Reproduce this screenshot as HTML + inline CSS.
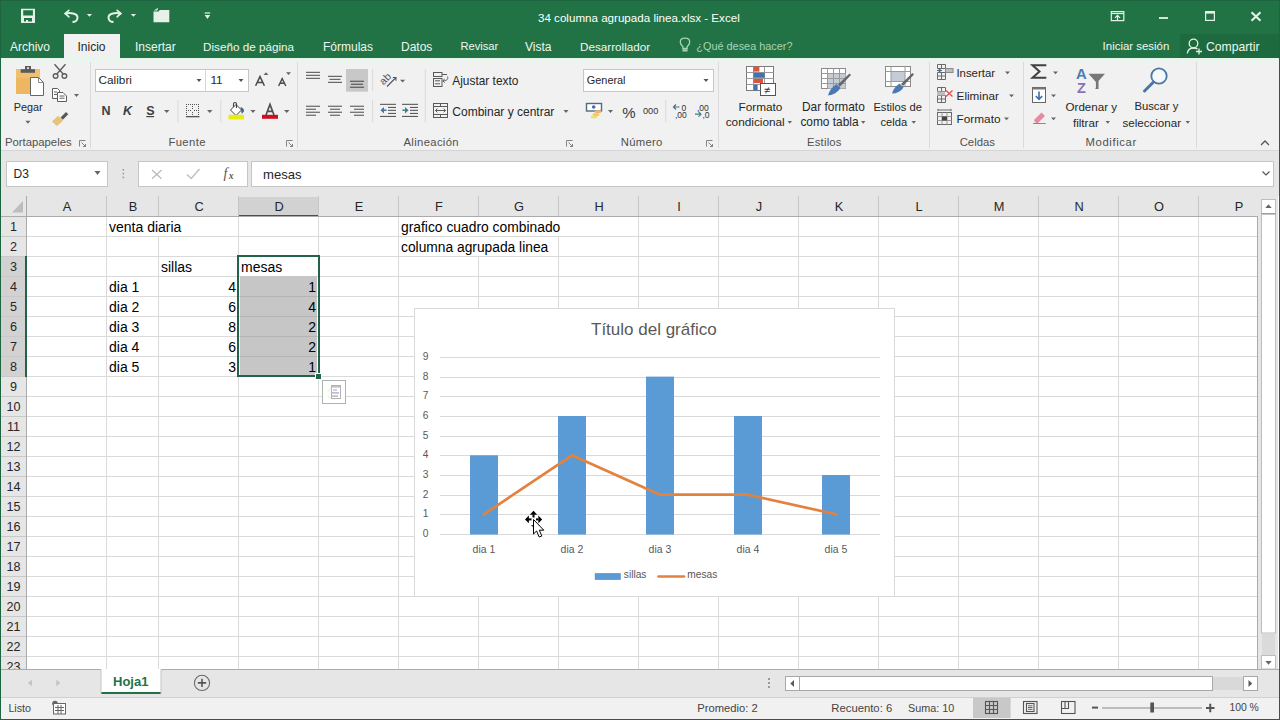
<!DOCTYPE html>
<html><head><meta charset="utf-8">
<style>
*{margin:0;padding:0;box-sizing:border-box}
html,body{width:1280px;height:720px;overflow:hidden;background:#fff;font-family:"Liberation Sans",sans-serif}
.a{position:absolute}
.t{position:absolute;white-space:nowrap;line-height:1}
svg{position:absolute;overflow:visible}
.tab{color:#eef7f1;font-size:12px;top:41px}
.glabel{font-size:11.3px;color:#505050;top:137px}
.vsep{position:absolute;width:1px;background:#dadada}
.rt{position:absolute;white-space:nowrap;line-height:1;font-size:12px;color:#262626}
.colh{position:absolute;top:196px;height:20px;font-size:12.8px;color:#262626;text-align:center;line-height:21px}
.rowh{position:absolute;left:1px;width:25px;height:20px;font-size:12.6px;color:#262626;text-align:center;line-height:21px}
.cell{position:absolute;font-size:14px;color:#000;line-height:1;white-space:nowrap}
.num{position:absolute;font-size:14px;color:#000;line-height:1;white-space:nowrap;text-align:right}
.st{position:absolute;white-space:nowrap;line-height:1;font-size:12px;color:#444}
</style></head><body>
<div class="a" style="left:1px;top:196px;width:1257px;height:20px;background:#e6e6e6"></div>
<div class="a" style="left:1px;top:216px;width:25px;height:453px;background:#e6e6e6"></div>
<div class="a" style="left:239px;top:197px;width:79px;height:18px;background:#d2d2d2"></div>
<div class="a" style="left:238px;top:215px;width:81px;height:2px;background:#22634a"></div>
<div class="a" style="left:1px;top:257px;width:24px;height:119px;background:#d2d2d2"></div>
<div class="colh" style="left:27px;width:80px">A</div>
<div class="a" style="left:106px;top:196px;width:1px;height:20px;background:#c6c6c6"></div>
<div class="colh" style="left:107px;width:52px">B</div>
<div class="a" style="left:158px;top:196px;width:1px;height:20px;background:#c6c6c6"></div>
<div class="colh" style="left:159px;width:80px">C</div>
<div class="a" style="left:238px;top:196px;width:1px;height:20px;background:#c6c6c6"></div>
<div class="colh" style="left:239px;width:80px">D</div>
<div class="a" style="left:318px;top:196px;width:1px;height:20px;background:#c6c6c6"></div>
<div class="colh" style="left:319px;width:80px">E</div>
<div class="a" style="left:398px;top:196px;width:1px;height:20px;background:#c6c6c6"></div>
<div class="colh" style="left:399px;width:80px">F</div>
<div class="a" style="left:478px;top:196px;width:1px;height:20px;background:#c6c6c6"></div>
<div class="colh" style="left:479px;width:80px">G</div>
<div class="a" style="left:558px;top:196px;width:1px;height:20px;background:#c6c6c6"></div>
<div class="colh" style="left:559px;width:80px">H</div>
<div class="a" style="left:638px;top:196px;width:1px;height:20px;background:#c6c6c6"></div>
<div class="colh" style="left:639px;width:80px">I</div>
<div class="a" style="left:718px;top:196px;width:1px;height:20px;background:#c6c6c6"></div>
<div class="colh" style="left:719px;width:80px">J</div>
<div class="a" style="left:798px;top:196px;width:1px;height:20px;background:#c6c6c6"></div>
<div class="colh" style="left:799px;width:80px">K</div>
<div class="a" style="left:878px;top:196px;width:1px;height:20px;background:#c6c6c6"></div>
<div class="colh" style="left:879px;width:80px">L</div>
<div class="a" style="left:958px;top:196px;width:1px;height:20px;background:#c6c6c6"></div>
<div class="colh" style="left:959px;width:80px">M</div>
<div class="a" style="left:1038px;top:196px;width:1px;height:20px;background:#c6c6c6"></div>
<div class="colh" style="left:1039px;width:80px">N</div>
<div class="a" style="left:1118px;top:196px;width:1px;height:20px;background:#c6c6c6"></div>
<div class="colh" style="left:1119px;width:80px">O</div>
<div class="a" style="left:1198px;top:196px;width:1px;height:20px;background:#c6c6c6"></div>
<div class="colh" style="left:1199px;width:80px">P</div>
<div class="rowh" style="top:217px">1</div>
<div class="a" style="left:1px;top:236px;width:25px;height:1px;background:#c9c9c9"></div>
<div class="rowh" style="top:237px">2</div>
<div class="a" style="left:1px;top:256px;width:25px;height:1px;background:#c9c9c9"></div>
<div class="rowh" style="top:257px">3</div>
<div class="a" style="left:1px;top:276px;width:25px;height:1px;background:#c9c9c9"></div>
<div class="rowh" style="top:277px">4</div>
<div class="a" style="left:1px;top:296px;width:25px;height:1px;background:#c9c9c9"></div>
<div class="rowh" style="top:297px">5</div>
<div class="a" style="left:1px;top:316px;width:25px;height:1px;background:#c9c9c9"></div>
<div class="rowh" style="top:317px">6</div>
<div class="a" style="left:1px;top:336px;width:25px;height:1px;background:#c9c9c9"></div>
<div class="rowh" style="top:337px">7</div>
<div class="a" style="left:1px;top:356px;width:25px;height:1px;background:#c9c9c9"></div>
<div class="rowh" style="top:357px">8</div>
<div class="a" style="left:1px;top:376px;width:25px;height:1px;background:#c9c9c9"></div>
<div class="rowh" style="top:377px">9</div>
<div class="a" style="left:1px;top:396px;width:25px;height:1px;background:#c9c9c9"></div>
<div class="rowh" style="top:397px">10</div>
<div class="a" style="left:1px;top:416px;width:25px;height:1px;background:#c9c9c9"></div>
<div class="rowh" style="top:417px">11</div>
<div class="a" style="left:1px;top:436px;width:25px;height:1px;background:#c9c9c9"></div>
<div class="rowh" style="top:437px">12</div>
<div class="a" style="left:1px;top:456px;width:25px;height:1px;background:#c9c9c9"></div>
<div class="rowh" style="top:457px">13</div>
<div class="a" style="left:1px;top:476px;width:25px;height:1px;background:#c9c9c9"></div>
<div class="rowh" style="top:477px">14</div>
<div class="a" style="left:1px;top:496px;width:25px;height:1px;background:#c9c9c9"></div>
<div class="rowh" style="top:497px">15</div>
<div class="a" style="left:1px;top:516px;width:25px;height:1px;background:#c9c9c9"></div>
<div class="rowh" style="top:517px">16</div>
<div class="a" style="left:1px;top:536px;width:25px;height:1px;background:#c9c9c9"></div>
<div class="rowh" style="top:537px">17</div>
<div class="a" style="left:1px;top:556px;width:25px;height:1px;background:#c9c9c9"></div>
<div class="rowh" style="top:557px">18</div>
<div class="a" style="left:1px;top:576px;width:25px;height:1px;background:#c9c9c9"></div>
<div class="rowh" style="top:577px">19</div>
<div class="a" style="left:1px;top:596px;width:25px;height:1px;background:#c9c9c9"></div>
<div class="rowh" style="top:597px">20</div>
<div class="a" style="left:1px;top:616px;width:25px;height:1px;background:#c9c9c9"></div>
<div class="rowh" style="top:617px">21</div>
<div class="a" style="left:1px;top:636px;width:25px;height:1px;background:#c9c9c9"></div>
<div class="rowh" style="top:637px">22</div>
<div class="a" style="left:1px;top:656px;width:25px;height:1px;background:#c9c9c9"></div>
<div class="rowh" style="top:657px">23</div>
<div class="a" style="left:1px;top:676px;width:25px;height:1px;background:#c9c9c9"></div>
<div class="a" style="left:1px;top:216px;width:1257px;height:1px;background:#ababab"></div>
<div class="a" style="left:26px;top:196px;width:1px;height:473px;background:#ababab"></div>
<div class="a" style="left:25px;top:256px;width:2px;height:121px;background:#22634a"></div>
<div class="a" style="left:27px;top:217px;width:1230px;height:452px;background:#fff"></div>
<div class="a" style="left:106px;top:217px;width:1px;height:452px;background:#dadada"></div>
<div class="a" style="left:158px;top:217px;width:1px;height:452px;background:#dadada"></div>
<div class="a" style="left:238px;top:217px;width:1px;height:452px;background:#dadada"></div>
<div class="a" style="left:318px;top:217px;width:1px;height:452px;background:#dadada"></div>
<div class="a" style="left:398px;top:217px;width:1px;height:452px;background:#dadada"></div>
<div class="a" style="left:478px;top:217px;width:1px;height:452px;background:#dadada"></div>
<div class="a" style="left:558px;top:217px;width:1px;height:452px;background:#dadada"></div>
<div class="a" style="left:638px;top:217px;width:1px;height:452px;background:#dadada"></div>
<div class="a" style="left:718px;top:217px;width:1px;height:452px;background:#dadada"></div>
<div class="a" style="left:798px;top:217px;width:1px;height:452px;background:#dadada"></div>
<div class="a" style="left:878px;top:217px;width:1px;height:452px;background:#dadada"></div>
<div class="a" style="left:958px;top:217px;width:1px;height:452px;background:#dadada"></div>
<div class="a" style="left:1038px;top:217px;width:1px;height:452px;background:#dadada"></div>
<div class="a" style="left:1118px;top:217px;width:1px;height:452px;background:#dadada"></div>
<div class="a" style="left:1198px;top:217px;width:1px;height:452px;background:#dadada"></div>
<div class="a" style="left:27px;top:236px;width:1230px;height:1px;background:#dadada"></div>
<div class="a" style="left:27px;top:256px;width:1230px;height:1px;background:#dadada"></div>
<div class="a" style="left:27px;top:276px;width:1230px;height:1px;background:#dadada"></div>
<div class="a" style="left:27px;top:296px;width:1230px;height:1px;background:#dadada"></div>
<div class="a" style="left:27px;top:316px;width:1230px;height:1px;background:#dadada"></div>
<div class="a" style="left:27px;top:336px;width:1230px;height:1px;background:#dadada"></div>
<div class="a" style="left:27px;top:356px;width:1230px;height:1px;background:#dadada"></div>
<div class="a" style="left:27px;top:376px;width:1230px;height:1px;background:#dadada"></div>
<div class="a" style="left:27px;top:396px;width:1230px;height:1px;background:#dadada"></div>
<div class="a" style="left:27px;top:416px;width:1230px;height:1px;background:#dadada"></div>
<div class="a" style="left:27px;top:436px;width:1230px;height:1px;background:#dadada"></div>
<div class="a" style="left:27px;top:456px;width:1230px;height:1px;background:#dadada"></div>
<div class="a" style="left:27px;top:476px;width:1230px;height:1px;background:#dadada"></div>
<div class="a" style="left:27px;top:496px;width:1230px;height:1px;background:#dadada"></div>
<div class="a" style="left:27px;top:516px;width:1230px;height:1px;background:#dadada"></div>
<div class="a" style="left:27px;top:536px;width:1230px;height:1px;background:#dadada"></div>
<div class="a" style="left:27px;top:556px;width:1230px;height:1px;background:#dadada"></div>
<div class="a" style="left:27px;top:576px;width:1230px;height:1px;background:#dadada"></div>
<div class="a" style="left:27px;top:596px;width:1230px;height:1px;background:#dadada"></div>
<div class="a" style="left:27px;top:616px;width:1230px;height:1px;background:#dadada"></div>
<div class="a" style="left:27px;top:636px;width:1230px;height:1px;background:#dadada"></div>
<div class="a" style="left:27px;top:656px;width:1230px;height:1px;background:#dadada"></div>
<div class="a" style="left:1257px;top:216px;width:1px;height:453px;background:#ababab"></div>
<div class="a" style="left:158px;top:217px;width:1px;height:19px;background:#fff"></div>
<div class="a" style="left:478px;top:217px;width:1px;height:19px;background:#fff"></div>
<div class="a" style="left:478px;top:237px;width:1px;height:19px;background:#fff"></div>
<div class="a" style="left:558px;top:217px;width:1px;height:19px;background:#fff"></div>
<div class="cell" style="left:109px;top:220px">venta diaria</div>
<div class="cell" style="left:401px;top:221px;font-size:13.85px">grafico cuadro combinado</div>
<div class="cell" style="left:401px;top:241px;font-size:13.8px">columna agrupada linea</div>
<div class="cell" style="left:161px;top:260px">sillas</div>
<div class="a" style="left:240px;top:276px;width:77px;height:99px;background:#c6c6c6"></div>
<div class="a" style="left:240px;top:296px;width:77px;height:1px;background:#b4b4b4"></div>
<div class="a" style="left:240px;top:316px;width:77px;height:1px;background:#b4b4b4"></div>
<div class="a" style="left:240px;top:336px;width:77px;height:1px;background:#b4b4b4"></div>
<div class="a" style="left:240px;top:356px;width:77px;height:1px;background:#b4b4b4"></div>
<div class="cell" style="left:241px;top:260px">mesas</div>
<div class="cell" style="left:109px;top:280px">dia 1</div>
<div class="cell" style="left:109px;top:300px">dia 2</div>
<div class="cell" style="left:109px;top:320px">dia 3</div>
<div class="cell" style="left:109px;top:340px">dia 4</div>
<div class="cell" style="left:109px;top:360px">dia 5</div>
<div class="num" style="left:200px;width:36px;top:280px">4</div>
<div class="num" style="left:200px;width:36px;top:300px">6</div>
<div class="num" style="left:200px;width:36px;top:320px">8</div>
<div class="num" style="left:200px;width:36px;top:340px">6</div>
<div class="num" style="left:200px;width:36px;top:360px">3</div>
<div class="num" style="left:280px;width:36px;top:280px">1</div>
<div class="num" style="left:280px;width:36px;top:300px">4</div>
<div class="num" style="left:280px;width:36px;top:320px">2</div>
<div class="num" style="left:280px;width:36px;top:340px">2</div>
<div class="num" style="left:280px;width:36px;top:360px">1</div>
<!-- selection -->
<div class="a" style="left:237px;top:255px;width:83px;height:122px;border:2px solid #22634a"></div>
<div class="a" style="left:316px;top:374px;width:5px;height:5px;background:#22634a;outline:1px solid #fff"></div>
<div class="a" style="left:322px;top:380px;width:24px;height:24px;border:1px solid #b2c2b8;background:#fff"></div>
<!-- window border -->
<div class="a" style="left:0;top:0;width:1280px;height:720px;border:1px solid #1f6440;z-index:50;pointer-events:none"></div>
<!-- title bar + tabs -->
<div class="a" style="left:0;top:0;width:1280px;height:58px;background:#217346"></div>
<div class="t" style="left:538px;top:12px;font-size:11.6px;color:#fff">34 columna agrupada linea.xlsx - Excel</div>
<div class="t tab" style="left:10px;top:41px">Archivo</div>
<div class="a" style="left:64px;top:34px;width:56px;height:25px;background:#f1f1f1"></div>
<div class="t tab" style="left:77.5px;top:41px;color:#262626">Inicio</div>
<div class="t tab" style="left:135px">Insertar</div>
<div class="t tab" style="left:203px;font-size:11.7px">Diseño de página</div>
<div class="t tab" style="left:323px">Fórmulas</div>
<div class="t tab" style="left:401px">Datos</div>
<div class="t tab" style="left:460.4px;font-size:11.2px">Revisar</div>
<div class="t tab" style="left:525px">Vista</div>
<div class="t tab" style="left:580px;font-size:11.7px">Desarrollador</div>
<div class="t tab" style="left:696.3px;top:41px;font-size:10.9px;color:#a6d4b4">¿Qué desea hacer?</div>
<div class="t tab" style="left:1102.6px;font-size:11.45px">Iniciar sesión</div>
<div class="a" style="left:1180px;top:34px;width:100px;height:24px;background:#1d6a3f"></div>
<div class="t tab" style="left:1206px;font-size:12.2px">Compartir</div>
<!-- ribbon -->
<div class="a" style="left:0;top:58px;width:1280px;height:93px;background:linear-gradient(#e6f6ec 0px,#e6f6ec 1px,#ecf4ee 3px,#f1f1f1 7px);border-bottom:1px solid #d5d5d5"></div>
<div class="t glabel" style="left:5px">Portapapeles</div>
<div class="t glabel" style="left:168.4px;letter-spacing:0.4px">Fuente</div>
<div class="t glabel" style="left:403.5px;letter-spacing:0.33px">Alineación</div>
<div class="t glabel" style="left:620.8px;letter-spacing:0.28px">Número</div>
<div class="t glabel" style="left:807px;letter-spacing:0.2px">Estilos</div>
<div class="t glabel" style="left:959.7px">Celdas</div>
<div class="t glabel" style="left:1085.6px;letter-spacing:0.6px">Modificar</div>
<div class="vsep" style="left:90px;top:62px;height:86px"></div>
<div class="vsep" style="left:297px;top:62px;height:86px"></div>
<div class="vsep" style="left:718px;top:62px;height:86px"></div>
<div class="vsep" style="left:929px;top:62px;height:86px"></div>
<div class="vsep" style="left:1023px;top:62px;height:86px"></div>
<div class="vsep" style="left:1196px;top:62px;height:86px"></div>
<!-- formula bar -->
<div class="a" style="left:0;top:151px;width:1280px;height:45px;background:#e6e6e6"></div>
<div class="a" style="left:6px;top:161px;width:102px;height:26px;background:#fff;border:1px solid #c6c6c6"></div>
<div class="t" style="left:13.5px;top:168px;font-size:12px;color:#262626">D3</div>
<div class="a" style="left:138px;top:161px;width:110px;height:26px;background:#fff;border:1px solid #c6c6c6"></div>
<div class="a" style="left:251px;top:161px;width:1023px;height:26px;background:#fff;border:1px solid #c6c6c6"></div>
<div class="t" style="left:263px;top:168px;font-size:13.1px;color:#262626">mesas</div>
<div class="t" style="left:223.5px;top:167px;font-size:14px;font-family:'Liberation Serif';font-style:italic;color:#555">f</div>
<div class="t" style="left:228.8px;top:171.5px;font-size:9.5px;font-family:'Liberation Serif';font-style:italic;font-weight:bold;color:#555">x</div>
<svg style="left:0;top:0" width="1280" height="720" viewBox="0 0 1280 720">
<!-- ===== title bar icons ===== -->
<g fill="#e6f2e7" stroke="none">
  <path d="M21 8.7H35V23H21Z M23.2 10.3V15.6H32.9V10.3Z M24 18V21.5H26V20H28V21.5H32V18Z" fill-rule="evenodd"/>
  <!-- undo -->
  <path d="M65.5 13.5 C 70 12.5, 77.5 13, 77.5 17.5 C 77.5 20.5, 75 22, 72.5 22" fill="none" stroke="#e6f2e7" stroke-width="2"/>
  <path d="M63.8 13.6 L69 9.2 L69.8 10.6 L66.6 13.6 L69.8 16.4 L69 17.9Z"/>
  <path d="M86.9 14H92L89.45 16.8Z"/>
  <!-- redo -->
  <path d="M120.5 13.5 C 116 12.5, 108.5 13, 108.5 17.5 C 108.5 20.5, 111 22, 113.5 22" fill="none" stroke="#e6f2e7" stroke-width="2"/>
  <path d="M122.2 13.6 L117 9.2 L116.2 10.6 L119.4 13.6 L116.2 16.4 L117 17.9Z"/>
  <path d="M130.8 14H136L133.4 16.8Z"/>
  <!-- folder -->
  <path d="M153.5 11.5H158.5L159.8 10H169.3V22.3H153.5Z"/>
  <path d="M154.5 10.5 L157.5 8.6 M157.5 8.6 L156.5 10.8" stroke="#e6f2e7" stroke-width="1" fill="none"/>
  <!-- customize -->
  <rect x="204.7" y="12.4" width="5.5" height="1.2"/>
  <path d="M204.7 15H210.2L207.45 18.9Z"/>
</g>
<!-- window controls -->
<g fill="none" stroke="#e6f2e7" stroke-width="1.2">
  <rect x="1111.3" y="11.6" width="12.5" height="9"/>
  <path d="M1111.3 13.5H1123.8"/>
  <path d="M1117.5 20.5V15.5 M1115 17.8L1117.5 15.3L1120 17.8"/>
  <path d="M1159 18H1168" stroke-width="1.8"/>
  <rect x="1205.6" y="11.6" width="8.8" height="8.8"/>
  <path d="M1205.6 12.6H1214.4" stroke-width="2"/>
  <path d="M1251.5 12.3L1260.5 20.8M1260.5 12.3L1251.5 20.8" stroke-width="2.1"/>
</g>
<!-- share person -->
<g fill="none" stroke="#e6f2e7" stroke-width="1.3">
  <circle cx="1193.5" cy="43.5" r="4.3"/>
  <path d="M1187.3 53.5 C1187.8 49.5, 1190 48, 1193.5 48 C1195 48, 1196.5 48.3, 1197.5 49"/>
  <path d="M1199 48.5V54.5 M1196 51.5H1202"/>
</g>
<!-- lightbulb -->
<g fill="none" stroke="#a6d4b4" stroke-width="1.3">
  <path d="M682.8 48.5 V46.5 C681.2 45.2, 680.3 43.8, 680.3 42 C680.3 39.6, 682.5 38.2, 685 38.2 C687.5 38.2, 689.7 39.6, 689.7 42 C689.7 43.8, 688.8 45.2, 687.2 46.5 V48.5Z"/>
</g>
<rect x="682.5" y="49.3" width="5" height="2.2" fill="#a6d4b4"/>
<!-- ===== Portapapeles ===== -->
<rect x="16" y="69" width="24" height="25" fill="#ecb760"/>
<rect x="16" y="69" width="24" height="9" fill="#f0c77a" opacity=".6"/>
<rect x="20.7" y="69.2" width="14.3" height="3.6" fill="#5b5b5b"/>
<rect x="25" y="66" width="6" height="4" fill="#5b5b5b"/>
<rect x="27" y="67.3" width="2" height="1.6" fill="#f1f1f1"/>
<path d="M30.5 77.5H38.5L43.5 82.5V95.5H30.5Z" fill="#fff" stroke="#666" stroke-width="1"/>
<path d="M38.5 77.5V82.5H43.5" fill="none" stroke="#888" stroke-width="1"/>
<!-- scissors -->
<g fill="none" stroke="#5e5e5e" stroke-width="1.4">
  <circle cx="55.6" cy="76" r="2.3"/>
  <circle cx="64.4" cy="76" r="2.3"/>
  <path d="M56.8 74 L65.5 64.3 M63.2 74 L54.5 64.3"/>
</g>
<!-- copy -->
<g fill="#fff" stroke="#5e5e5e" stroke-width="1">
  <path d="M52.5 88.5H57.5L59.5 90.5V98.5H52.5Z"/>
  <path d="M57.5 92.5H63L66.5 96V101.5H57.5Z"/>
</g>
<g stroke="#5e5e5e" stroke-width="1">
  <path d="M54 92H57 M54 94.5H57 M59.5 96H64.5 M59.5 98.2H64.5"/>
</g>
<path d="M74 94H79L76.5 97Z" fill="#666"/>
<!-- brush -->
<path d="M60.5 117.5 L66 112 L68.3 114.3 L62.8 119.8Z" fill="#595959"/>
<path d="M52 121.5 L58 115.8 L63 120.8 L57 126 C55 124.5, 53.5 123, 52 121.5Z" fill="#e6c27a"/>
<path d="M25.4 120.7H30.4L27.9 123.7Z" fill="#666"/>

<!-- ===== Fuente ===== -->
<rect x="95.5" y="69.5" width="153" height="22" fill="#fff" stroke="#c6c6c6"/>
<path d="M205.5 70V91" stroke="#d6d6d6"/>
<path d="M196.5 79H201.5L199 82Z M238.5 79H243.5L241 82Z" fill="#555"/>
<!-- grow / shrink font -->
<path d="M263.5 75H268.5L266 72.3Z M286 72.3H291L288.5 75Z" fill="#666"/>
<path d="M255.6 85.8 L260 76.6 L264.4 85.8 M257.3 82.4 H262.7" fill="none" stroke="#4a4a4a" stroke-width="1.5"/>
<path d="M278.6 86 L282.2 78.6 L285.8 86 M280 83.3 H284.4" fill="none" stroke="#4a4a4a" stroke-width="1.4"/>
<!-- N K S -->
<path d="M164 110H169.5L166.75 113Z M207 110H212.5L209.75 113Z M250.4 110H255.5L253 113Z M284 110H289.5L286.75 113Z" fill="#666"/>
<rect x="146.3" y="116" width="7.8" height="1.2" fill="#444"/>
<path d="M177.9 100V122 M220.8 100V122" stroke="#d9d9d9"/>
<!-- borders -->
<g fill="#555">
  <path d="M186 104h1v1h-1z M188 104h1v1h-1z M190 104h1v1h-1z M192 104h1v1h-1z M194 104h1v1h-1z M196 104h1v1h-1z M198 104h1v1h-1z
           M186 106h1v1h-1z M186 108h1v1h-1z M186 110h1v1h-1z M186 112h1v1h-1z M186 114h1v1h-1z
           M198 106h1v1h-1z M198 108h1v1h-1z M198 110h1v1h-1z M198 112h1v1h-1z M198 114h1v1h-1z
           M192 106h1v1h-1z M192 108h1v1h-1z M192 112h1v1h-1z M192 114h1v1h-1z
           M188 110h1v1h-1z M190 110h1v1h-1z M194 110h1v1h-1z M196 110h1v1h-1z"/>
  <rect x="186" y="116" width="13.5" height="1.3"/>
</g>
<!-- fill color -->
<path d="M230.5 110 L236 104.5 L241.5 110 L236 115.5Z" fill="#fff" stroke="#444" stroke-width="1"/>
<path d="M233.5 107 V104 C233.5 102, 236.5 102, 236.5 104 V108" fill="none" stroke="#444" stroke-width="1.1"/>
<path d="M240.5 107 C243 107.5, 244.5 109.5, 243.8 111.5 L241.8 114 Z" fill="#3f6290"/>
<rect x="228.5" y="114.8" width="15.5" height="4.6" fill="#e6ee10"/>
<!-- font color -->
<path d="M266 115 L270 104.5 L274 115 M267.5 111.3 H272.5" fill="none" stroke="#505050" stroke-width="1.7"/>
<rect x="262" y="114.8" width="16" height="4" fill="#cc1020"/>
<!-- ===== Alineación ===== -->
<g fill="#5a5a5a">
  <rect x="306" y="71.8" width="14" height="1.1"/><rect x="306" y="74.8" width="14" height="1.1"/><rect x="306" y="77.8" width="14" height="1.1"/>
  <rect x="328" y="75.8" width="14" height="1.1"/><rect x="329.5" y="78.8" width="11" height="1.1"/><rect x="328" y="81.8" width="14" height="1.1"/>
</g>
<rect x="346" y="69" width="22" height="22.7" fill="#c8c8c8"/>
<g fill="#505050">
  <rect x="350" y="80.7" width="14" height="1.1"/><rect x="351" y="83.7" width="12" height="1.1"/><rect x="350" y="86.7" width="14" height="1.1"/>
</g>
<path d="M372.6 69V91 M372.6 100V122" stroke="#d9d9d9"/>
<!-- orientation -->
<text x="0" y="0" transform="translate(383.5 85.5) rotate(-45)" font-family="Liberation Sans" font-size="10.5" fill="#555">ab</text>
<path d="M387 86.5 L396 77.5 M392.8 77.5 H396 V80.7" fill="none" stroke="#555" stroke-width="1.1"/>
<path d="M400 79.8H405.2L402.6 82.5Z" fill="#666"/>
<g fill="#5a5a5a">
  <rect x="306" y="105.7" width="14" height="1.1"/><rect x="306" y="108.7" width="10" height="1.1"/><rect x="306" y="111.7" width="14" height="1.1"/><rect x="306" y="114.7" width="10" height="1.1"/>
  <rect x="328" y="105.7" width="14" height="1.1"/><rect x="330" y="108.7" width="10" height="1.1"/><rect x="328" y="111.7" width="14" height="1.1"/><rect x="330" y="114.7" width="10" height="1.1"/>
  <rect x="350" y="105.7" width="14" height="1.1"/><rect x="354" y="108.7" width="10" height="1.1"/><rect x="350" y="111.7" width="14" height="1.1"/><rect x="354" y="114.7" width="10" height="1.1"/>
  <!-- indent dec -->
  <rect x="380" y="103.8" width="16" height="1.1"/><rect x="388" y="106.9" width="8" height="1.1"/><rect x="388" y="109.8" width="8" height="1.1"/><rect x="388" y="112.9" width="8" height="1.1"/><rect x="380" y="115.9" width="16" height="1.1"/>
  <!-- indent inc -->
  <rect x="402" y="103.8" width="16" height="1.1"/><rect x="410" y="106.9" width="8" height="1.1"/><rect x="410" y="109.8" width="8" height="1.1"/><rect x="410" y="112.9" width="8" height="1.1"/><rect x="402" y="115.9" width="16" height="1.1"/>
</g>
<path d="M380.5 110.3 L384 107 V109.5 H386.5 V111 H384 V113.5Z" fill="#4a72a8"/>
<path d="M408.5 110.3 L405 107 V109.5 H402.5 V111 H405 V113.5Z" fill="#3f7f86"/>
<path d="M425.3 69V122" stroke="#d9d9d9"/>
<!-- wrap text icon -->
<g fill="none" stroke="#5a5a5a" stroke-width="1">
  <rect x="433.5" y="72.5" width="8.5" height="4"/>
  <path d="M442 74.5H447"/>
  <rect x="433.5" y="78.5" width="8.5" height="8"/>
  <path d="M435 80.8H440 M435 83.8H440"/>
  <path d="M447.5 76.5 C448.5 79, 447 80.8, 443 80.8"/>
  <path d="M444.8 79 L442.8 80.8 L444.8 82.6"/>
</g>
<!-- merge icon -->
<g fill="none" stroke="#5a5a5a" stroke-width="1">
  <rect x="433.5" y="103.5" width="14" height="14"/>
  <path d="M433.5 106.5H447.5 M433.5 114.5H447.5 M440.5 103.5V106.5 M440.5 114.5V117.5"/>
  <path d="M435.5 110.5H445.5 M437.3 108.7L435.5 110.5L437.3 112.3 M443.7 108.7L445.5 110.5L443.7 112.3"/>
</g>
<path d="M563.5 110H568.5L566 113Z" fill="#666"/>
<!-- launchers -->
<g fill="none" stroke="#777" stroke-width="0.9">
  <path d="M79.5 146.5V140.5H85.5 M81.5 142.5L85.5 146.5 M85.5 144V146.5H83"/>
  <path d="M286.5 146.5V140.5H292.5 M288.5 142.5L292.5 146.5 M292.5 144V146.5H290"/>
  <path d="M566.5 146.5V140.5H572.5 M568.5 142.5L572.5 146.5 M572.5 144V146.5H570"/>
  <path d="M706.5 146.5V140.5H712.5 M708.5 142.5L712.5 146.5 M712.5 144V146.5H710"/>
</g>

<!-- ===== Número ===== -->
<rect x="583.5" y="69.5" width="130" height="22" fill="#fff" stroke="#c6c6c6"/>
<path d="M703.5 79H708.5L706 82Z" fill="#555"/>
<!-- currency -->
<rect x="586.5" y="103.5" width="15" height="7.5" fill="#fff" stroke="#4d6c80" stroke-width="1.4"/>
<circle cx="593.7" cy="107" r="1.8" fill="#5a5fa8"/>
<ellipse cx="598" cy="111.5" rx="3.5" ry="1.6" fill="#f0b070"/>
<ellipse cx="596" cy="114.5" rx="3.5" ry="1.6" fill="#f0c860"/>
<ellipse cx="594" cy="117" rx="3.5" ry="1.4" fill="#e8e070"/>
<path d="M608 110H613L610.5 113Z" fill="#666"/>
<path d="M665.7 100V122" stroke="#d9d9d9"/>
<!-- decimals -->
<path d="M679.5 107H673.5 M676 104.5L673.5 107L676 109.5" fill="none" stroke="#4a6f86" stroke-width="1.2"/>
<path d="M695 114.2H701 M698.5 111.7L701 114.2L698.5 116.7" fill="none" stroke="#3f7f86" stroke-width="1.2"/>

<!-- ===== Estilos ===== -->
<!-- formato condicional -->
<g>
  <rect x="746.5" y="66.5" width="27" height="24" fill="#fff" stroke="#7a7a7a" stroke-width="1"/>
  <path d="M746.5 72.5H773.5 M746.5 78.5H773.5 M746.5 84.5H773.5 M753.5 66.5V90.5 M764.5 66.5V90.5" stroke="#9a9a9a" stroke-width="1"/>
  <rect x="753.6" y="66.6" width="5.8" height="5" fill="#d8543c"/>
  <rect x="753.6" y="72.8" width="11" height="5" fill="#4471b0"/>
  <rect x="753.6" y="78.9" width="9.4" height="4.2" fill="#d8543c"/>
  <rect x="753.6" y="84.6" width="4" height="5.8" fill="#4471b0"/>
  <rect x="760.5" y="83.5" width="15" height="12" fill="#fff" stroke="#555" stroke-width="1"/>
  <text x="764" y="93.5" font-family="Liberation Sans" font-size="11" fill="#333">≠</text>
</g>
<!-- dar formato como tabla -->
<g>
  <rect x="821.5" y="68.5" width="24" height="20" fill="#fff" stroke="#8a8a8a"/>
  <rect x="828" y="73" width="17.5" height="15.5" fill="#c5ccd6"/>
  <path d="M821.5 73.5H845.5 M821.5 78.5H845.5 M821.5 83.5H845.5 M827.5 68.5V88.5 M833.5 68.5V88.5 M839.5 68.5V88.5" stroke="#9a9a9a" stroke-width="1"/>
  <path d="M838 84.5 L849.5 73.5 L851 75 L840 86.5Z" fill="#666"/>
  <path d="M828 95.5 C829 91, 832 87, 836.5 84 L840.5 88 C837.5 92.5, 833.5 95, 828 95.5Z" fill="#4a78b0"/>
</g>
<!-- estilos de celda -->
<g>
  <rect x="885.5" y="66.5" width="25" height="20" fill="#fff" stroke="#8a8a8a"/>
  <rect x="891" y="71.5" width="14" height="10" fill="#c5ccd6"/>
  <path d="M885.5 71.5H910.5 M885.5 81.5H910.5 M891 66.5V86.5 M905 66.5V86.5" stroke="#9a9a9a" stroke-width="1"/>
  <path d="M901 84 L912.5 73 L914 74.5 L903 86Z" fill="#666"/>
  <path d="M892 93.5 C893 89, 896 86, 899.5 83.5 L903.5 87.5 C900.5 91.5, 897 93.5, 892 93.5Z" fill="#4a78b0"/>
</g>
<path d="M787.5 121H792L789.75 123.7Z M861 121H865.5L863.25 123.7Z M911.5 121H916L913.75 123.7Z" fill="#666"/>

<!-- ===== Celdas ===== -->
<g fill="none" stroke="#6a6a6a" stroke-width="1">
  <!-- insertar -->
  <path d="M937.5 64.5H945.5V68.5H937.5Z M937.5 72.5H945.5V79.5H937.5Z M941.5 64.5V68.5 M941.5 72.5V79.5 M937.5 76H945.5"/>
  <rect x="945.5" y="68.5" width="7.5" height="4" fill="#bdbdbd" stroke="#8a8a8a"/>
  <!-- eliminar -->
  <path d="M937.5 87.5H945.5V91.5H937.5Z M937.5 95.5H945.5V102.5H937.5Z M941.5 87.5V91.5 M941.5 95.5V102.5 M937.5 99H945.5"/>
  <!-- formato -->
  <rect x="937.5" y="112.5" width="14" height="12"/>
  <path d="M937.5 116.5H951.5 M937.5 120.5H951.5 M942 112.5V124.5 M947 112.5V124.5" stroke="#9a9a9a"/>
  <path d="M938 110H951 M938 108.8V111.2 M951 108.8V111.2"/>
</g>
<path d="M937.5 70.5 L940.5 68 V73Z" fill="#4a6a8a"/>
<path d="M937 70.5H942" stroke="#4a6a8a" stroke-width="1"/>
<rect x="937" y="91.5" width="8" height="4" fill="#bdbdbd"/>
<path d="M946 90.5L952.5 96.5 M952.5 90.5L946 96.5" stroke="#d9534f" stroke-width="1.3"/>
<rect x="942" y="116.5" width="5" height="4" fill="#444"/>
<path d="M1005 71.5H1010L1007.5 74.3Z M1009 94.5H1014L1011.5 97.3Z M1004 117.5H1009L1006.5 120.3Z" fill="#666"/>

<!-- ===== Modificar ===== -->
<path d="M1046.3 65.3H1032.5L1039.5 71.5L1032.5 77.8H1046.3" fill="none" stroke="#404040" stroke-width="2" stroke-linejoin="miter"/>
<path d="M1053 71.5H1058L1055.5 74.3Z M1051 94.5H1056L1053.5 97.3Z M1051 117.5H1056L1053.5 120.3Z" fill="#666"/>
<rect x="1032.5" y="87.5" width="13" height="15" fill="#fff" stroke="#666"/>
<rect x="1032.5" y="87.5" width="13" height="2" fill="#777"/>
<path d="M1039 91.5V99 M1035.8 96L1039 99.3L1042.2 96" fill="none" stroke="#3d6fa8" stroke-width="1.6"/>
<path d="M1034 120 L1041.5 112.5 L1045 116 L1037.5 123.5 C1036 123.5, 1035 122.5, 1034 120Z" fill="#e58aa0"/>
<path d="M1033 123.5H1045.8" stroke="#c06070" stroke-width="0.9"/>
<!-- A Z funnel -->
<text x="1076" y="78.6" font-family="Liberation Sans" font-size="14.8" font-weight="bold" fill="#4a7cb0">A</text>
<text x="1077" y="92.8" font-family="Liberation Sans" font-size="14.5" font-weight="bold" fill="#8b70b6">Z</text>
<path d="M1088.5 73.7H1105L1098.5 81V89H1095V81Z" fill="#777"/>
<path d="M1095.5 81.5V88.5" stroke="#fff" stroke-width="0.8"/>
<!-- magnifier -->
<circle cx="1159" cy="76" r="7.7" fill="#f5f8fb" stroke="#4a76a4" stroke-width="1.8"/>
<path d="M1153 82.5 L1144.5 91" stroke="#4a76a4" stroke-width="3" stroke-linecap="round"/>
<path d="M1105.5 121H1110L1107.75 123.7Z M1185.5 121H1190L1187.75 123.7Z" fill="#666"/>
<!-- collapse caret -->
<path d="M1261 145 L1265 141 L1269 145" fill="none" stroke="#555" stroke-width="1.3"/>
</svg>
<div class="rt" style="left:13.7px;top:102.3px;font-size:10.8px">Pegar</div>
<div class="rt" style="left:98.5px;top:74.9px;font-size:11.8px">Calibri</div>
<div class="rt" style="left:210.4px;top:74.9px;font-size:11.8px">11</div>
<div class="rt" style="left:101.4px;top:105.4px;font-size:12.5px;font-weight:bold;color:#404040">N</div>
<div class="rt" style="left:123px;top:105.4px;font-size:12.5px;font-weight:bold;font-style:italic;color:#404040">K</div>
<div class="rt" style="left:146.3px;top:105.4px;font-size:12.5px;font-weight:bold;color:#404040">S</div>
<div class="rt" style="left:452.3px;top:76.3px;font-size:11.9px">Ajustar texto</div>
<div class="rt" style="left:452.3px;top:105.6px;font-size:12px">Combinar y centrar</div>
<div class="rt" style="left:586.8px;top:75.4px;font-size:10.9px">General</div>
<div class="rt" style="left:622.3px;top:105px;font-size:15px;color:#3a3a3a">%</div>
<div class="rt" style="left:643px;top:107.3px;font-size:9.2px;color:#333">000</div>
<div class="rt" style="left:681.5px;top:104.3px;font-size:8.5px;color:#333">0</div>
<div class="rt" style="left:675px;top:111.3px;font-size:8.5px;color:#333">,00</div>
<div class="rt" style="left:697px;top:104.3px;font-size:8.5px;color:#333">,00</div>
<div class="rt" style="left:702.5px;top:111.3px;font-size:8.5px;color:#333">,0</div>
<div class="rt" style="left:738.5px;top:101.9px;font-size:11.8px">Formato</div>
<div class="rt" style="left:725.7px;top:117.3px;font-size:11.8px">condicional</div>
<div class="rt" style="left:802px;top:101.9px;font-size:11.9px">Dar formato</div>
<div class="rt" style="left:800.4px;top:117.3px;font-size:11.9px">como tabla</div>
<div class="rt" style="left:873.4px;top:101.9px;font-size:11.2px">Estilos de</div>
<div class="rt" style="left:880.5px;top:117.3px;font-size:11.2px">celda</div>
<div class="rt" style="left:956.4px;top:68.1px;font-size:11.4px">Insertar</div>
<div class="rt" style="left:956.6px;top:89.7px;font-size:11.7px">Eliminar</div>
<div class="rt" style="left:956.6px;top:113.5px;font-size:11.8px">Formato</div>
<div class="rt" style="left:1065.5px;top:100.9px;font-size:11.6px">Ordenar y</div>
<div class="rt" style="left:1073px;top:116.7px;font-size:11.6px">filtrar</div>
<div class="rt" style="left:1134.4px;top:100.9px;font-size:11.3px">Buscar y</div>
<div class="rt" style="left:1122.4px;top:116.7px;font-size:11.6px">seleccionar</div>
<div class="a" style="left:0;top:669px;width:1280px;height:28px;background:#e6e6e6;border-top:1px solid #ababab"></div>
<div class="a" style="left:0;top:697px;width:1280px;height:23px;background:#f1f1f1;border-top:1px solid #d0d0d0"></div>
<div class="a" style="left:101px;top:669px;width:60px;height:25px;background:#fff;border-bottom:2px solid #217346"></div>
<div class="t" style="left:113px;top:675px;font-size:13px;font-weight:bold;color:#217346">Hoja1</div>
<div class="st" style="left:8.4px;top:703px;font-size:10.7px">Listo</div>
<div class="st" style="left:697.3px;top:703px;font-size:11.2px">Promedio: 2</div>
<div class="st" style="left:831.3px;top:703px;font-size:11.3px">Recuento: 6</div>
<div class="st" style="left:908px;top:703px;font-size:10.8px">Suma: 10</div>
<div class="st" style="left:1229.4px;top:703px;font-size:10.4px">100 %</div>
<svg style="left:0;top:0" width="1280" height="720" viewBox="0 0 1280 720">
<!-- formula bar bits -->
<path d="M94.5 171H100.5L97.5 175Z" fill="#666"/>
<rect x="122.5" y="169" width="1.6" height="1.6" fill="#9a9a9a"/>
<rect x="122.5" y="172.8" width="1.6" height="1.6" fill="#9a9a9a"/>
<rect x="122.5" y="176.6" width="1.6" height="1.6" fill="#9a9a9a"/>
<path d="M152 170L161.5 178.8M161.5 170L152 178.8" stroke="#b9b9b9" stroke-width="1.2"/>
<path d="M187 174.5L191.3 178.5L199.5 169" fill="none" stroke="#c0c0c0" stroke-width="1.5"/>
<path d="M1262.5 171.5L1266 175L1269.5 171.5" fill="none" stroke="#555" stroke-width="1.2"/>
<!-- select all -->
<path d="M23 201.1V212.6H12Z" fill="#bdbdbd"/>
<!-- quick analysis -->
<rect x="322.5" y="380.5" width="23" height="23" fill="#fff" stroke="#a9b5ad"/>
<rect x="331.5" y="385.5" width="9" height="13" fill="#fff" stroke="#b4b4b4"/>
<rect x="332" y="386" width="8" height="1.6" fill="#c0c0c0"/>
<rect x="333" y="389.5" width="4" height="1" fill="#a8a8a8"/>
<rect x="332" y="392.3" width="7" height="1.2" fill="#a0a0e0"/>
<rect x="332" y="395.5" width="6" height="1.2" fill="#a8a8a8"/>
<path d="M327.5 392 L330.5 388.5 M327.8 396.5 L330.5 397.8" stroke="#eeeeb0" stroke-width="1"/>
<!-- vertical scrollbar -->
<rect x="1258" y="196" width="20" height="473" fill="#e6e6e6"/>
<rect x="1261.5" y="199.5" width="14" height="14" fill="#fff" stroke="#bdbdbd"/>
<path d="M1265.3 208H1271.7L1268.5 204.2Z" fill="#666"/>
<rect x="1261.5" y="213.5" width="14" height="419.5" fill="#fff" stroke="#bdbdbd"/>
<rect x="1261.5" y="213" width="14" height="1.6" fill="#a0a0a0"/>
<rect x="1262" y="633.5" width="13" height="22" fill="#dadada"/>
<rect x="1261.5" y="655.5" width="14" height="13.5" fill="#fff" stroke="#bdbdbd"/>
<path d="M1265.3 661H1271.7L1268.5 664.8Z" fill="#666"/>
<!-- sheet nav -->
<path d="M31.9 679.7V686.3L27.8 683Z" fill="#c3c3c3"/>
<path d="M56.3 679.7V686.3L60.4 683Z" fill="#c3c3c3"/>
<rect x="100.5" y="669" width="1" height="25" fill="#c6c6c6"/>
<rect x="160.5" y="669" width="1" height="25" fill="#c6c6c6"/>
<circle cx="202" cy="682.9" r="7.6" fill="none" stroke="#6a6a6a" stroke-width="1.1"/>
<path d="M197.8 682.9H206.2 M202 678.7V687.1" stroke="#555" stroke-width="1.6"/>
<!-- horizontal scrollbar -->
<rect x="768" y="678" width="2" height="2" fill="#9a9a9a"/>
<rect x="768" y="682" width="2" height="2" fill="#9a9a9a"/>
<rect x="768" y="686" width="2" height="2" fill="#9a9a9a"/>
<rect x="785.5" y="676.5" width="14" height="14" fill="#fff" stroke="#a8a8a8"/>
<path d="M794 680V687L790.3 683.5Z" fill="#5a5a5a"/>
<rect x="799.5" y="676.5" width="413" height="14" fill="#fff" stroke="#a8a8a8"/>
<rect x="1213" y="677" width="30" height="13" fill="#d9d9d9"/>
<rect x="1243.5" y="676.5" width="14" height="14" fill="#fff" stroke="#a8a8a8"/>
<path d="M1248.5 680V687L1252.2 683.5Z" fill="#5a5a5a"/>
<!-- status bar icons -->
<circle cx="55" cy="703.5" r="2.8" fill="#666"/>
<rect x="53.5" y="703.5" width="12" height="10.5" fill="#fff" stroke="#666"/>
<path d="M55 707.5H64 M55 710.5H64 M58 705V714 M61 705V714" stroke="#666" stroke-width="1"/>
<rect x="973" y="698" width="37.6" height="20" fill="#c8c8c8"/>
<g fill="none" stroke="#555" stroke-width="1.1">
  <rect x="985.5" y="701.5" width="12" height="12"/>
  <path d="M985.5 705.5H997.5 M985.5 709.5H997.5 M989.5 701.5V713.5 M993.5 701.5V713.5"/>
  <rect x="1023.5" y="701.5" width="13.5" height="12"/>
  <rect x="1026.5" y="703.5" width="7.5" height="8"/>
  <path d="M1028 705.8H1032.5 M1028 707.5H1032.5 M1028 709.3H1032.5" stroke-width="0.9"/>
  <rect x="1061.5" y="701.5" width="13.5" height="12"/>
  <path d="M1061.5 708.5H1068.5V701.5 M1065 701.5V708.5"/>
</g>
<rect x="1092" y="706.6" width="6" height="2" fill="#555"/>
<rect x="1102" y="707.5" width="100" height="1" fill="#8a8a8a"/>
<rect x="1150.3" y="702.5" width="3.7" height="10" fill="#555"/>
<path d="M1206 708H1214.5 M1210.25 703.8V712.2" stroke="#555" stroke-width="2"/>
</svg>
<div class="a" style="left:414px;top:308px;width:481px;height:289px;background:#fff;border:1px solid #d9d9d9"></div>
<svg style="left:0;top:0" width="1280" height="720" viewBox="0 0 1280 720">
<path d="M440 534.5H880" stroke="#d9d9d9" stroke-width="1"/>
<path d="M440 514.5H880" stroke="#d9d9d9" stroke-width="1"/>
<path d="M440 495.5H880" stroke="#d9d9d9" stroke-width="1"/>
<path d="M440 475.5H880" stroke="#d9d9d9" stroke-width="1"/>
<path d="M440 455.5H880" stroke="#d9d9d9" stroke-width="1"/>
<path d="M440 436.5H880" stroke="#d9d9d9" stroke-width="1"/>
<path d="M440 416.5H880" stroke="#d9d9d9" stroke-width="1"/>
<path d="M440 396.5H880" stroke="#d9d9d9" stroke-width="1"/>
<path d="M440 377.5H880" stroke="#d9d9d9" stroke-width="1"/>
<path d="M440 357.5H880" stroke="#d9d9d9" stroke-width="1"/>
<rect x="470" y="455.3" width="28" height="79.2" fill="#5b9bd5"/>
<rect x="558" y="416.0" width="28" height="118.5" fill="#5b9bd5"/>
<rect x="646" y="376.6" width="28" height="157.9" fill="#5b9bd5"/>
<rect x="734" y="416.0" width="28" height="118.5" fill="#5b9bd5"/>
<rect x="822" y="475.0" width="28" height="59.5" fill="#5b9bd5"/>
<polyline points="484,514.3 572,455.3 660,494.7 748,494.7 836,514.3" fill="none" stroke="#e3823f" stroke-width="2.7" stroke-linejoin="round" stroke-linecap="round"/>
<rect x="594.8" y="573.1" width="26" height="6.8" fill="#5b9bd5"/>
<path d="M658.5 576.5H684" stroke="#e3823f" stroke-width="2.7" stroke-linecap="round"/>
</svg>
<div class="t" style="left:418px;width:10.5px;text-align:right;top:528.5px;font-size:10.2px;color:#595959">0</div>
<div class="t" style="left:418px;width:10.5px;text-align:right;top:508.5px;font-size:10.2px;color:#595959">1</div>
<div class="t" style="left:418px;width:10.5px;text-align:right;top:489.5px;font-size:10.2px;color:#595959">2</div>
<div class="t" style="left:418px;width:10.5px;text-align:right;top:469.5px;font-size:10.2px;color:#595959">3</div>
<div class="t" style="left:418px;width:10.5px;text-align:right;top:449.5px;font-size:10.2px;color:#595959">4</div>
<div class="t" style="left:418px;width:10.5px;text-align:right;top:430.5px;font-size:10.2px;color:#595959">5</div>
<div class="t" style="left:418px;width:10.5px;text-align:right;top:410.5px;font-size:10.2px;color:#595959">6</div>
<div class="t" style="left:418px;width:10.5px;text-align:right;top:390.5px;font-size:10.2px;color:#595959">7</div>
<div class="t" style="left:418px;width:10.5px;text-align:right;top:371.5px;font-size:10.2px;color:#595959">8</div>
<div class="t" style="left:418px;width:10.5px;text-align:right;top:351.5px;font-size:10.2px;color:#595959">9</div>
<div class="t" style="left:464px;width:40px;text-align:center;top:544.2px;font-size:10.5px;color:#595959">dia 1</div>
<div class="t" style="left:552px;width:40px;text-align:center;top:544.2px;font-size:10.5px;color:#595959">dia 2</div>
<div class="t" style="left:640px;width:40px;text-align:center;top:544.2px;font-size:10.5px;color:#595959">dia 3</div>
<div class="t" style="left:728px;width:40px;text-align:center;top:544.2px;font-size:10.5px;color:#595959">dia 4</div>
<div class="t" style="left:816px;width:40px;text-align:center;top:544.2px;font-size:10.5px;color:#595959">dia 5</div>
<div class="t" style="left:591px;top:321.3px;font-size:17px;color:#595959">Título del gráfico</div>
<div class="t" style="left:623.8px;top:570.2px;font-size:10.2px;color:#595959">sillas</div>
<div class="t" style="left:687.3px;top:570.2px;font-size:10.2px;color:#595959">mesas</div>
<svg style="left:0;top:0" width="1280" height="720" viewBox="0 0 1280 720">
<g fill="#000">
  <path d="M529.8 514.8H537.2L533.5 510.8Z"/>
  <rect x="532.5" y="514.5" width="2" height="3"/>
  <path d="M525 519.4L528.9 515.6V523.2Z"/>
  <rect x="528.5" y="518.4" width="3" height="2"/>
  <path d="M542.2 519.4L538.3 515.6V523.2Z"/>
  <rect x="536" y="518.4" width="2.5" height="2"/>
  <path d="M530.8 525.2H533.5V527.2Z"/>
</g>
<path d="M533.5 519.5V534 L536.6 531 L539.2 537 L541.8 536 L539.3 530.2 H543.8Z" fill="#fff" stroke="#000" stroke-width="1" stroke-linejoin="miter"/>
</svg>

</body></html>
